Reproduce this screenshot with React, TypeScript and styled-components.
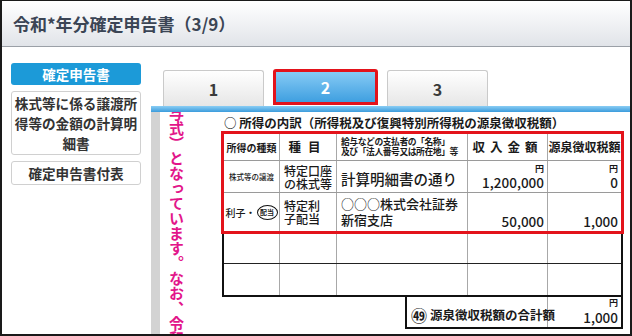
import React from 'react';
import styled, { createGlobalStyle } from 'styled-components';

const GlobalStyle = createGlobalStyle`
  html, body {
    margin: 0;
    padding: 0;
    background: #fff;
  }
  body {
    font-family: "Noto Sans CJK JP", "Noto Sans", sans-serif;
  }
`;

const Window = styled.div`
  width: 632px;
  height: 336px;
  box-sizing: border-box;
  border: 2px solid #1a1a1a;
  border-top-width: 1px;
  display: flex;
  flex-direction: column;
  overflow: hidden;
  background: #fff;
`;

const Header = styled.header`
  height: 45px;
  flex: none;
  display: flex;
  align-items: center;
  padding-left: 11px;
  background: linear-gradient(#ffffff, #e1e4e9);
  border-bottom: 1px solid #9ba0a7;
  font-size: 17px;
  font-weight: 700;
  color: #3b4555;
`;

const Body = styled.div`
  flex: 1;
  display: flex;
  min-height: 0;
`;

const Sidebar = styled.nav`
  width: 149px;
  flex: none;
  box-sizing: border-box;
  padding: 16px 0 0 9px;
  display: flex;
  flex-direction: column;
  gap: 6px;
`;

const SideItem = styled.div<{ $active?: boolean }>`
  width: 130px;
  box-sizing: border-box;
  border-radius: 3px;
  text-align: center;
  font-weight: 700;
  ${(p) =>
    p.$active
      ? `
    height: 22px;
    line-height: 22px;
    font-size: 13.5px;
    color: #fff;
    background: #1c9ad8;
  `
      : `
    padding: 1px 0;
    line-height: 20px;
    font-size: 13.6px;
    color: #333;
    background: #fff;
    border: 1px solid #d0d0d0;
  `}
`;

const Main = styled.main`
  flex: 1;
  display: flex;
  flex-direction: column;
  padding-top: 22px;
  min-width: 0;
`;

const TabRow = styled.div`
  height: 37px;
  display: flex;
  align-items: flex-end;
  gap: 9px;
  padding-left: 12px;
`;

const Tab = styled.div<{ $active?: boolean }>`
  box-sizing: border-box;
  display: flex;
  align-items: center;
  justify-content: center;
  font-size: 16px;
  font-weight: 700;
  border-radius: 3px 3px 0 0;
  ${(p) =>
    p.$active
      ? `
    width: 105px;
    height: 36px;
    margin-bottom: 1px;
    border: 3px solid #e3131b;
    color: #fff;
    background: linear-gradient(#86cbf5, #3f9fe0);
  `
      : `
    width: 101px;
    height: 36px;
    border: 1px solid #cacaca;
    border-bottom: none;
    color: #3a3a3a;
    background: linear-gradient(#ffffff, #e6e6e6);
  `}
`;

const BlueBar = styled.div`
  height: 6px;
  flex: none;
  background: linear-gradient(#8acdf4, #3c9cdc);
`;

const DocArea = styled.div`
  flex: 1;
  display: flex;
  min-height: 0;
`;

const GrayStrip = styled.div`
  width: 9px;
  flex: none;
  background: #d3d3d3;
`;

const Doc = styled.div`
  flex: 1;
  display: flex;
  overflow: hidden;
  background: #fff;
`;

const VertCol = styled.div`
  width: 62px;
  flex: none;
  box-sizing: border-box;
  padding-left: 7px;
  overflow: hidden;
`;

const VertText = styled.div`
  writing-mode: vertical-rl;
  margin-top: -6px;
  font-size: 15px;
  line-height: 18px;
  font-weight: 700;
  color: #e2168a;
  white-space: nowrap;
`;

const Content = styled.div`
  width: 401px;
  flex: none;
  padding-top: 1px;
  color: #1a1a1a;
`;

const SectionTitle = styled.div`
  height: 19px;
  line-height: 19px;
  font-size: 12.5px;
  font-weight: 700;
  white-space: nowrap;
  padding-left: 2px;
`;

const Table = styled.div`
  border: 2px solid #111;
`;

const Highlight = styled.div`
  outline: 3px solid #e3131b;
  position: relative;
  z-index: 1;
`;

const Row = styled.div<{ $h: number; $line?: string }>`
  display: grid;
  grid-template-columns: 56px 57px 131px 80px 1fr;
  height: ${(p) => p.$h}px;
  box-sizing: border-box;
  border-top: ${(p) => (p.$line ? `1px solid ${p.$line}` : 'none')};
`;

const Cell = styled.div<{ $align?: 'center' | 'left' | 'right' }>`
  position: relative;
  box-sizing: border-box;
  border-right: 1px solid #a8a8a8;
  display: flex;
  flex-direction: column;
  justify-content: center;
  align-items: ${(p) =>
    p.$align === 'left' ? 'flex-start' : p.$align === 'right' ? 'flex-end' : 'center'};
  padding: ${(p) => (p.$align === 'left' ? '0 0 0 4px' : p.$align === 'right' ? '0 3px 0 0' : '0')};
  overflow: hidden;
  &:last-child {
    border-right: none;
  }
`;

const HeadText = styled.div<{ $size: number; $spacing?: number }>`
  font-size: ${(p) => p.$size}px;
  font-weight: 700;
  letter-spacing: ${(p) => p.$spacing || 0}px;
  white-space: nowrap;
  line-height: 1.1;
`;

const SmallLines = styled.div`
  font-size: 8.8px;
  font-weight: 700;
  line-height: 10px;
  white-space: nowrap;
  letter-spacing: -0.45px;
`;

const TinyLabel = styled.div`
  font-size: 7.5px;
  font-weight: 500;
  white-space: nowrap;
`;

const Lines = styled.div<{ $size: number; $lh: number }>`
  font-size: ${(p) => p.$size}px;
  line-height: ${(p) => p.$lh}px;
  font-weight: 500;
  white-space: nowrap;
`;

const Yen = styled.div`
  font-size: 9px;
  font-weight: 700;
  line-height: 10px;
  margin-top: 3px;
`;

const Amount = styled.div`
  font-size: 13.5px;
  line-height: 16px;
  font-weight: 500;
  margin-top: auto;
  margin-bottom: 2px;
`;

const MoneyCell = styled(Cell)`
  justify-content: flex-start;
`;

const InterestLabel = styled.div`
  display: flex;
  align-items: center;
  gap: 1px;
  font-size: 10px;
  font-weight: 500;
  white-space: nowrap;
`;

const Circled = styled.span`
  display: inline-flex;
  align-items: center;
  justify-content: center;
  width: 21px;
  height: 15px;
  box-sizing: border-box;
  border: 1.6px solid #111;
  border-radius: 50%;
  font-size: 7px;
  font-weight: 700;
`;

const SummaryRow = styled.div`
  display: flex;
  justify-content: flex-end;
`;

const SummaryBox = styled.div`
  width: 218px;
  height: 32px;
  box-sizing: border-box;
  border: 2px solid #111;
  border-top: none;
  display: grid;
  grid-template-columns: 141px 1fr;
`;

const SummaryLabel = styled.div`
  border-right: 1px solid #a8a8a8;
  display: flex;
  align-items: flex-end;
  gap: 3px;
  padding: 0 0 3px 4px;
  font-size: 12.5px;
  font-weight: 700;
  white-space: nowrap;
`;

const CircleNum = styled.span`
  font-size: 16px;
  line-height: 18px;
`;

const SummaryValue = styled.div`
  display: flex;
  flex-direction: column;
  align-items: flex-end;
  padding-right: 3px;
`;

const rows = [
  {
    kind: <TinyLabel>株式等の譲渡</TinyLabel>,
    item: ['特定口座', 'の株式等'],
    payer: (
      <Lines $size={14.5} $lh={18} style={{ marginTop: 4 }}>
        計算明細書の通り
      </Lines>
    ),
    income: '1,200,000',
    tax: '0',
    yen: true,
    h: 32
  },
  {
    kind: (
      <InterestLabel>
        利子・<Circled>配当</Circled>
      </InterestLabel>
    ),
    item: ['特定利', '子配当'],
    payer: (
      <Lines $size={13} $lh={16}>
        ○○○株式会社証券
        <br />
        新宿支店
      </Lines>
    ),
    income: '50,000',
    tax: '1,000',
    yen: false,
    h: 39
  }
];

export default function App() {
  return (
    <>
      <GlobalStyle />
      <Window>
        <Header>令和*年分確定申告書（3/9）</Header>
        <Body>
          <Sidebar>
            <SideItem $active>確定申告書</SideItem>
            <SideItem>株式等に係る譲渡所得等の金額の計算明細書</SideItem>
            <SideItem>確定申告書付表</SideItem>
          </Sidebar>
          <Main>
            <TabRow>
              <Tab>1</Tab>
              <Tab $active>2</Tab>
              <Tab>3</Tab>
            </TabRow>
            <BlueBar />
            <DocArea>
              <GrayStrip />
              <Doc>
                <VertCol>
                  <VertText>与式）となっています。なお、令和</VertText>
                </VertCol>
                <Content>
                  <SectionTitle>○ 所得の内訳（所得税及び復興特別所得税の源泉徴収税額）</SectionTitle>
                  <Table>
                    <Highlight>
                      <Row $h={26}>
                        <Cell>
                          <HeadText $size={10}>所得の種類</HeadText>
                        </Cell>
                        <Cell>
                          <HeadText $size={12.5} $spacing={7}>
                            種目
                          </HeadText>
                        </Cell>
                        <Cell $align="left">
                          <SmallLines>
                            給与などの支払者の「名称」
                            <br />
                            及び「法人番号又は所在地」等
                          </SmallLines>
                        </Cell>
                        <Cell>
                          <HeadText $size={12.5} $spacing={5}>
                            収入金額
                          </HeadText>
                        </Cell>
                        <Cell>
                          <HeadText $size={12}>源泉徴収税額</HeadText>
                        </Cell>
                      </Row>
                      {rows.map((r, i) => (
                        <Row key={i} $h={r.h} $line="#9a9a9a">
                          <Cell>{r.kind}</Cell>
                          <Cell $align="left">
                            <Lines $size={12} $lh={13}>
                              {r.item[0]}
                              <br />
                              {r.item[1]}
                            </Lines>
                          </Cell>
                          <Cell $align="left">{r.payer}</Cell>
                          <MoneyCell $align="right">
                            {r.yen && <Yen>円</Yen>}
                            <Amount>{r.income}</Amount>
                          </MoneyCell>
                          <MoneyCell $align="right">
                            {r.yen && <Yen>円</Yen>}
                            <Amount>{r.tax}</Amount>
                          </MoneyCell>
                        </Row>
                      ))}
                    </Highlight>
                    <Row $h={32} $line="#333">
                      <Cell />
                      <Cell />
                      <Cell />
                      <Cell />
                      <Cell />
                    </Row>
                    <Row $h={32} $line="#222">
                      <Cell />
                      <Cell />
                      <Cell />
                      <Cell />
                      <Cell />
                    </Row>
                  </Table>
                  <SummaryRow>
                    <SummaryBox>
                      <SummaryLabel>
                        <CircleNum>㊾</CircleNum>源泉徴収税額の合計額
                      </SummaryLabel>
                      <SummaryValue>
                        <Yen style={{ marginTop: 1 }}>円</Yen>
                        <Amount>1,000</Amount>
                      </SummaryValue>
                    </SummaryBox>
                  </SummaryRow>
                </Content>
              </Doc>
            </DocArea>
          </Main>
        </Body>
      </Window>
    </>
  );
}
